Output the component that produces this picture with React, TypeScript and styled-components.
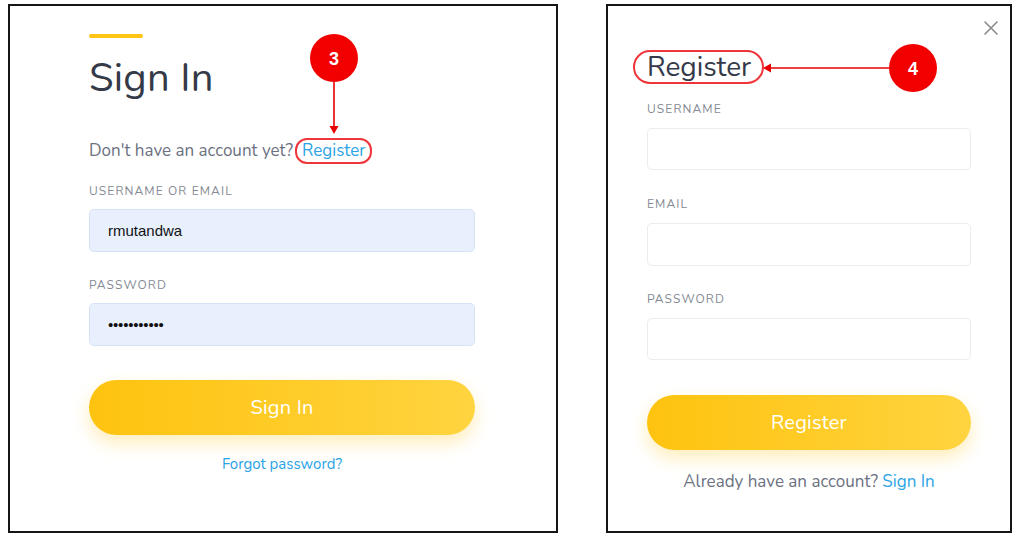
import React from "react";
import styled, { createGlobalStyle } from "styled-components";

const GlobalStyle = createGlobalStyle`
  html, body { margin: 0; padding: 0; background: #ffffff; }
  body { font-family: "Nunito", "Lato", "Noto Sans", sans-serif; }
  * { box-sizing: border-box; }
`;

const Page = styled.div`
  display: flex;
  align-items: flex-start;
  gap: 48px;
  padding: 4px 0 0 8px;
  width: 1024px;
  height: 542px;
`;

const Panel = styled.section<{ $w: number; $padL: number; $padR: number }>`
  position: relative;
  width: ${(p) => p.$w}px;
  height: 529px;
  border: 2px solid #151515;
  background: #fff;
  display: flex;
  flex-direction: column;
  align-items: flex-start;
  padding: 0 ${(p) => p.$padR}px 0 ${(p) => p.$padL}px;
`;

const AccentBar = styled.div`
  width: 54px;
  height: 4px;
  border-radius: 2px;
  background: #fec514;
  margin-top: 28px;
`;

const BigTitle = styled.h1`
  margin: 16px 0 0;
  font-size: 40px;
  line-height: 48px;
  font-weight: 400;
  color: #343a48;
  letter-spacing: 0.2px;
`;

const Subtitle = styled.p<{ $center?: boolean }>`
  margin: ${(p) => (p.$center ? "20px 0 0" : "36px 0 0")};
  font-size: 17px;
  line-height: 24px;
  color: #6b7180;
  ${(p) => (p.$center ? "align-self: stretch; text-align: center;" : "")}
`;

const Link = styled.a`
  color: #2ba3e6;
  text-decoration: none;
  cursor: pointer;
`;

const Circled = styled.span`
  display: inline-block;
  border: 2px solid #f0353a;
  border-radius: 12px;
  padding: 0 5px 0 5px;
  line-height: 22px;
  margin-left: 2px;
`;

const FieldLabel = styled.label<{ $top: number }>`
  display: block;
  margin-top: ${(p) => p.$top}px;
  font-size: 12px;
  line-height: 16px;
  letter-spacing: 1.1px;
  text-transform: uppercase;
  color: #858a94;
`;

const Input = styled.div<{ $filled?: boolean; $h: number }>`
  align-self: stretch;
  height: ${(p) => p.$h}px;
  margin-top: ${(p) => (p.$filled ? 10 : 11)}px;
  border-radius: 5px;
  border: 1px solid ${(p) => (p.$filled ? "#d6e2f7" : "#ececef")};
  background: ${(p) => (p.$filled ? "#e8f0fe" : "#ffffff")};
  display: flex;
  align-items: center;
  padding-left: 18px;
  font-family: "Liberation Sans", Arial, sans-serif;
  font-size: 15px;
  color: #111;
`;

const Dots = styled.span`
  font-size: 15px;
  letter-spacing: -0.2px;
`;

const PrimaryButton = styled.button<{ $top: number }>`
  align-self: stretch;
  height: 55px;
  margin-top: ${(p) => p.$top}px;
  border: none;
  border-radius: 28px;
  background: linear-gradient(90deg, #fec30f 0%, #ffd43f 100%);
  box-shadow: 0 8px 18px rgba(254, 200, 40, 0.32);
  color: #ffffff;
  font-family: inherit;
  font-size: 20px;
  letter-spacing: 0.2px;
`;

const CenterLink = styled(Link)`
  align-self: stretch;
  text-align: center;
  margin-top: 19px;
  font-size: 15px;
  line-height: 20px;
`;

const SmallTitle = styled.h2`
  margin: 44px 0 0 -14px;
  display: inline-block;
  padding: 0 11px 0 12px;
  border: 2px solid #f0353a;
  border-radius: 17px;
  font-size: 28px;
  line-height: 30px;
  font-weight: 400;
  color: #343a48;
`;

const CloseButton = styled.button`
  position: absolute;
  top: 12px;
  right: 9px;
  width: 20px;
  height: 20px;
  padding: 0;
  border: none;
  background: none;
  display: flex;
  align-items: center;
  justify-content: center;
`;

const Overlay = styled.svg`
  position: absolute;
  left: 0;
  top: 0;
  width: 100%;
  height: 100%;
  pointer-events: none;
  overflow: visible;
`;

const Badge: React.FC<{ cx: number; cy: number; n: string }> = ({ cx, cy, n }) => (
  <g>
    <circle cx={cx} cy={cy} r={24} fill="#f20000" />
    <text
      x={cx}
      y={cy + 6.5}
      textAnchor="middle"
      fontFamily="Liberation Sans, Arial, sans-serif"
      fontWeight={700}
      fontSize={18}
      fill="#fff"
    >
      {n}
    </text>
  </g>
);

export default function App() {
  return (
    <>
      <GlobalStyle />
      <Page>
        <Panel $w={550} $padL={79} $padR={81}>
          <AccentBar />
          <BigTitle>Sign In</BigTitle>
          <Subtitle>
            Don't have an account yet?
            <Circled>
              <Link>Register</Link>
            </Circled>
          </Subtitle>
          <FieldLabel $top={19}>Username or Email</FieldLabel>
          <Input $filled $h={43}>rmutandwa</Input>
          <FieldLabel $top={25}>Password</FieldLabel>
          <Input $filled $h={43}>
            <Dots>•••••••••••</Dots>
          </Input>
          <PrimaryButton $top={34}>Sign In</PrimaryButton>
          <CenterLink>Forgot password?</CenterLink>
          <Overlay>
            <Badge cx={324} cy={52} n="3" />
            <line x1={324} y1={76} x2={324} y2={122} stroke="#e60000" strokeWidth={1.6} />
            <polygon points="319.5,120 328.5,120 324,128" fill="#e60000" />
          </Overlay>
        </Panel>

        <Panel $w={406} $padL={39} $padR={39}>
          <CloseButton aria-label="close">
            <svg width="14" height="14" viewBox="0 0 14 14">
              <path d="M1 1 L13 13 M13 1 L1 13" stroke="#8a8a8a" strokeWidth="1.6" strokeLinecap="round" />
            </svg>
          </CloseButton>
          <SmallTitle>Register</SmallTitle>
          <FieldLabel $top={17}>Username</FieldLabel>
          <Input $h={42} />
          <FieldLabel $top={26}>Email</FieldLabel>
          <Input $h={43} />
          <FieldLabel $top={25}>Password</FieldLabel>
          <Input $h={42} />
          <PrimaryButton $top={35}>Register</PrimaryButton>
          <Subtitle $center>
            Already have an account? <Link>Sign In</Link>
          </Subtitle>
          <Overlay>
            <Badge cx={305} cy={62} n="4" />
            <line x1={281} y1={62} x2={162} y2={62} stroke="#e60000" strokeWidth={1.6} />
            <polygon points="155,62 163,57.5 163,66.5" fill="#e60000" />
          </Overlay>
        </Panel>
      </Page>
    </>
  );
}
